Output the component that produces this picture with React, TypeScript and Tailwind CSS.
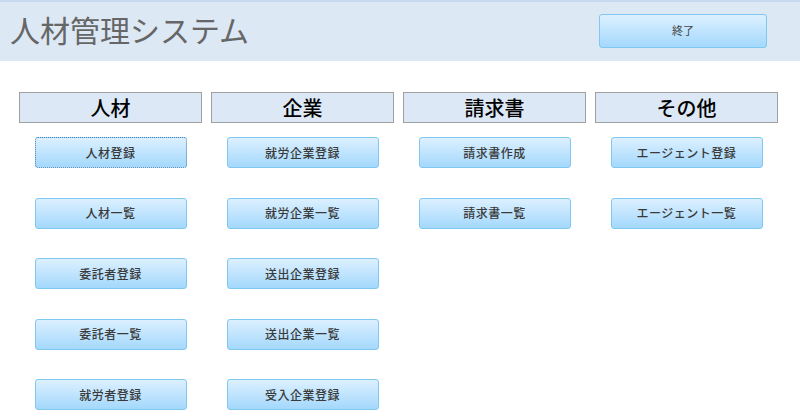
const sections: { title: string; items: string[] }[] = [
  { title: "人材", items: ["人材登録", "人材一覧", "委託者登録", "委託者一覧", "就労者登録"] },
  { title: "企業", items: ["就労企業登録", "就労企業一覧", "送出企業登録", "送出企業一覧", "受入企業登録"] },
  { title: "請求書", items: ["請求書作成", "請求書一覧"] },
  { title: "その他", items: ["エージェント登録", "エージェント一覧"] },
];

const font = { fontFamily: '"Noto Sans CJK JP", "Noto Sans", sans-serif' };

function MenuButton({ label, focused }: { label: string; focused?: boolean }) {
  return (
    <button
      className={
        "h-[31px] w-[152px] rounded-[3px] border bg-gradient-to-b from-[#dcf0ff] to-[#a3d8fc] text-[12px] font-medium tracking-[0.5px] text-[#3a3a3a] " +
        (focused ? "border-dotted border-[#3f7fae]" : "border-[#80c8f0]")
      }
    >
      {label}
    </button>
  );
}

export default function App() {
  return (
    <div className="h-[420px] w-[800px] overflow-hidden bg-white" style={font}>
      <header className="flex h-[61px] items-center justify-between border-t-2 border-[#c8daed] bg-[#dde8f5] pl-[10px] pr-[33px]">
        <h1 className="-mt-[6px] text-[30px] font-normal leading-none text-[#666666]">人材管理システム</h1>
        <button className="mt-[-2px] h-[34px] w-[168px] rounded-[3px] border border-[#80c8f0] bg-gradient-to-b from-[#dcf0ff] to-[#a3d8fc] text-[11px] text-[#444]">
          終了
        </button>
      </header>

      <main className="grid grid-cols-[repeat(4,183px)] gap-x-[9px] px-[19px] pt-[31px]">
        {sections.map((s) => (
          <section key={s.title} className="flex flex-col items-center">
            <div className="flex h-[31px] w-full items-center justify-center border border-[#a0a0a0] bg-[#dce8f5] text-[20px] font-medium text-black">
              {s.title}
            </div>
            <div className="mt-[14px] flex flex-col gap-[29.5px]">
              {s.items.map((item, i) => (
                <MenuButton key={item} label={item} focused={s.title === "人材" && i === 0} />
              ))}
            </div>
          </section>
        ))}
      </main>
    </div>
  );
}
